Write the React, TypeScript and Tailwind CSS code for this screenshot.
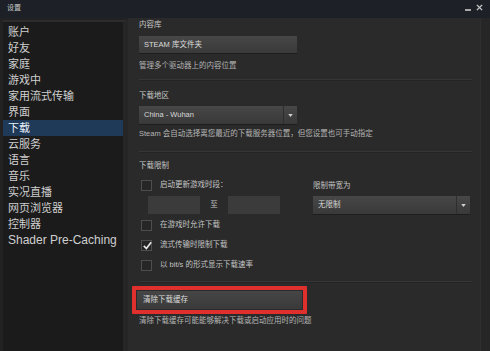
import React from "react";

const font = "font-['Liberation_Sans','Noto_Sans_CJK_SC',sans-serif]";

const items = [
  "账户",
  "好友",
  "家庭",
  "游戏中",
  "家用流式传输",
  "界面",
  "下载",
  "云服务",
  "语言",
  "音乐",
  "实况直播",
  "网页浏览器",
  "控制器",
  "Shader Pre-Caching",
];

function Checkbox({ checked }: { checked?: boolean }) {
  return (
    <div className="relative w-[11px] h-[11px] border border-[#4e4e4e] bg-[#262626] shrink-0">
      {checked && (
        <svg viewBox="0 0 12 12" className="absolute left-[0px] top-[-1px] w-[11px] h-[11px]">
          <path d="M2 6.5 L4.8 9.3 L10 2.5" fill="none" stroke="#e8e8e8" strokeWidth="1.8" />
        </svg>
      )}
    </div>
  );
}

function CheckRow({ label, checked, className = "" }: { label: string; checked?: boolean; className?: string }) {
  return (
    <div className={`flex items-center h-[12px] pl-[2px] ${className}`}>
      <Checkbox checked={checked} />
      <span className="ml-[8px] text-[7.5px] leading-[10px] text-[#c4c4c4]">{label}</span>
    </div>
  );
}

function Dropdown({ label, className = "" }: { label: string; className?: string }) {
  return (
    <div className={`flex h-[18px] bg-gradient-to-b from-[#474747] to-[#393939] shadow-[0_1px_0_#1e1e1e] ${className}`}>
      <div className="flex-1 flex items-center pl-[5px] text-[7.5px] text-[#d8d8d8]">{label}</div>
      <div className="w-[14px] flex items-center justify-center border-l border-[#2e2e2e]">
        <svg viewBox="0 0 6 4" className="w-[5px] h-[3px]">
          <path d="M0 0 L6 0 L3 4 Z" fill="#d0d0d0" />
        </svg>
      </div>
    </div>
  );
}

function Separator({ className = "" }: { className?: string }) {
  return <div className={`h-[2px] bg-[#363636] border-b border-[#242424] mr-[8px] ${className}`} />;
}

export default function App() {
  return (
    <div className={`w-[490px] h-[351px] flex flex-col bg-[#242424] overflow-hidden ${font}`}>
      {/* title bar */}
      <div className="h-[18px] flex items-center justify-between bg-[#1d2127] pl-[7px] pr-[7px] shrink-0">
        <span className="text-[7px] leading-[8px] text-[#c8c8c8] mt-[-2px]">设置</span>
        <div className="flex items-center gap-[5px] mt-[-4px]">
          <div className="w-[6px] h-[1.5px] bg-[#a8a8a8] mt-[6px]" />
          <svg viewBox="0 0 8 8" className="w-[7px] h-[7px]">
            <path d="M1 1 L7 7 M7 1 L1 7" stroke="#c8c8c8" strokeWidth="1.6" />
          </svg>
        </div>
      </div>

      <div className="flex flex-1 min-h-0">
        {/* sidebar */}
        <div className="w-[128px] shrink-0 flex pl-[3px] pt-[2px] bg-[#222222]">
          <div className="flex-1 bg-[#1b1b1b] border-t-2 border-[#2c2c2c] border-r-[5px] border-r-[#262626] pt-[2px]">
            {items.map((it, i) => (
              <div
                key={it}
                className={`h-[16px] flex items-center pl-[5px] whitespace-nowrap ${
                  i === 6 ? "bg-[#1f3a58] text-[#e8f0fa]" : "text-[#cfcfcf]"
                } ${i === 13 ? "text-[12px]" : "text-[11px]"}`}
              >
                {it}
              </div>
            ))}
          </div>
        </div>

        {/* main */}
        <div className="flex-1 flex bg-[#2a2a2a]">
          <div className="flex-1 pl-[11px] flex flex-col">
            <div className="mt-[2px] text-[7.5px] leading-[10px] text-[#c8c8c8]">内容库</div>
            <div className="mt-[6px] w-[158px] h-[17px] flex items-center pl-[5px] bg-gradient-to-b from-[#474747] to-[#3a3a3a] text-[7.5px] text-[#dcdcdc] shadow-[0_1px_0_#1e1e1e]">
              STEAM 库文件夹
            </div>
            <div className="mt-[8px] text-[7.5px] leading-[10px] text-[#b4b4b4]">管理多个驱动器上的内容位置</div>
            <Separator className="mt-[8px]" />

            <div className="mt-[10px] text-[7.5px] leading-[10px] text-[#c8c8c8]">下载地区</div>
            <Dropdown label="China - Wuhan" className="mt-[5px] w-[158px]" />
            <div className="mt-[5px] text-[7.5px] leading-[10px] text-[#b4b4b4] whitespace-nowrap">
              Steam 会自动选择离您最近的下载服务器位置，但您设置也可手动指定
            </div>
            <Separator className="mt-[12px]" />

            <div className="mt-[8px] text-[7.5px] leading-[10px] text-[#c8c8c8]">下载限制</div>

            <div className="mt-[8px] flex">
              <div className="w-[174px] flex flex-col">
                <CheckRow label="启动更新游戏时段：" />
                <div className="mt-[5px] flex items-center pl-[9px]">
                  <div className="w-[52px] h-[18px] bg-[#3b3b3b]" />
                  <span className="w-[28px] text-center text-[7.5px] text-[#c4c4c4]">至</span>
                  <div className="w-[52px] h-[18px] bg-[#3b3b3b]" />
                </div>
              </div>
              <div className="flex flex-col">
                <div className="h-[12px] flex items-center text-[7.5px] text-[#c4c4c4] mt-[1px]">限制带宽为</div>
                <Dropdown label="无限制" className="mt-[4px] w-[157px]" />
              </div>
            </div>

            <CheckRow label="在游戏时允许下载" className="mt-[5px]" />
            <CheckRow label="流式传输时限制下载" checked className="mt-[8px]" />
            <CheckRow label="以 bit/s 的形式显示下载速率" className="mt-[8px]" />

            <Separator className="mt-[10px]" />

            <div className="mt-[3px] ml-[-7px] w-[175px] h-[28px] border-[4px] border-[#e0302e] rounded-[1px] p-[1px]">
              <div className="h-full flex items-center pl-[6px] bg-gradient-to-b from-[#464646] to-[#3a3a3a] text-[7.5px] text-[#dcdcdc]">
                清除下载缓存
              </div>
            </div>
            <div className="mt-[2px] text-[7.5px] leading-[10px] text-[#b4b4b4]">清除下载缓存可能能够解决下载或启动应用时的问题</div>
          </div>
          <div className="w-[10px] bg-[#262626] border-l border-[#2e2e2e]" />
        </div>
      </div>
    </div>
  );
}
